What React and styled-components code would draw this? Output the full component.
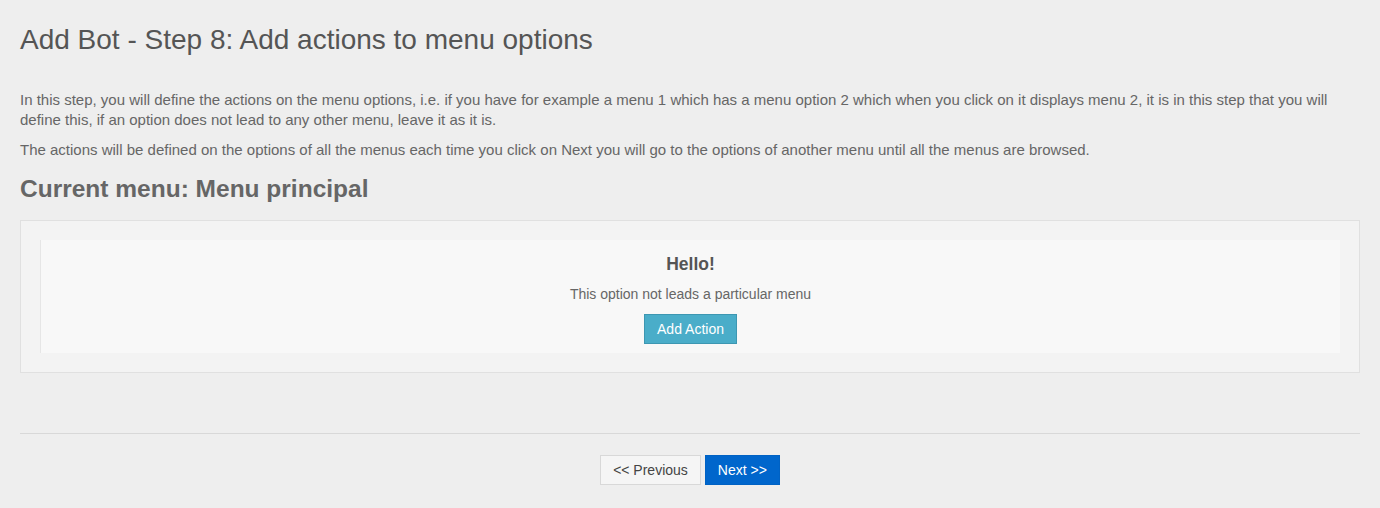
import React from "react";
import styled, { createGlobalStyle } from "styled-components";

const Global = createGlobalStyle`
  html, body { margin: 0; padding: 0; background: #eeeeee; }
  body { font-family: "Liberation Sans", Arial, sans-serif; color: #666; }
`;

const Page = styled.div`
  padding: 0 20px;
`;

const Title = styled.h1`
  margin: 0;
  padding-top: 24px;
  font-size: 28px;
  font-weight: normal;
  line-height: 32px;
  color: #555;
`;

const Intro = styled.p`
  margin: ${(p) => p.$top || 0}px 0 0;
  font-size: 15px;
  line-height: 20px;
  color: #666;
`;

const SubTitle = styled.h2`
  margin: 14px 0 0;
  font-size: 24.5px;
  font-weight: bold;
  line-height: 30px;
  color: #666;
`;

const Panel = styled.div`
  margin-top: 16px;
  border: 1px solid #e0e0e0;
  background: #f3f3f3;
  padding: 19px 19px;
`;

const Card = styled.div`
  background: #f8f8f8;
  border-left: 1px solid #e6e6e6;
  display: flex;
  flex-direction: column;
  align-items: center;
  padding: 14px 0 9px;
`;

const CardTitle = styled.h3`
  margin: 0;
  font-size: 17.5px;
  font-weight: bold;
  line-height: 20px;
  color: #555;
`;

const CardText = styled.p`
  margin: 10px 0 0;
  font-size: 14px;
  line-height: 20px;
  color: #666;
`;

const ActionButton = styled.button`
  margin-top: 10px;
  height: 30px;
  padding: 0 12px;
  background: #4aadc9;
  border: 1px solid #3d97b2;
  color: #fff;
  font-family: inherit;
  font-size: 14px;
`;

const Divider = styled.hr`
  margin: 60px 0 0;
  border: 0;
  border-top: 1px solid #d8d8d8;
`;

const Nav = styled.div`
  display: flex;
  justify-content: center;
  gap: 4px;
  margin-top: 21px;
`;

const NavButton = styled.button`
  height: 30px;
  padding: 0 12px;
  font-family: inherit;
  font-size: 14px;
  border: 1px solid ${(p) => (p.$primary ? "#0062c4" : "#d8d8d8")};
  background: ${(p) => (p.$primary ? "#0066cc" : "#f5f5f5")};
  color: ${(p) => (p.$primary ? "#fff" : "#444")};
`;

export default function App() {
  return (
    <Page>
      <Global />
      <Title>Add Bot - Step 8: Add actions to menu options</Title>
      <Intro $top={34}>
        In this step, you will define the actions on the menu options, i.e. if you have for example a menu 1 which has a menu option 2 which when you click on it displays menu 2, it is in this step that you will define this, if an option does not lead to any other menu, leave it as it is.
      </Intro>
      <Intro $top={10}>
        The actions will be defined on the options of all the menus each time you click on Next you will go to the options of another menu until all the menus are browsed.
      </Intro>
      <SubTitle>Current menu: Menu principal</SubTitle>
      <Panel>
        <Card>
          <CardTitle>Hello!</CardTitle>
          <CardText>This option not leads a particular menu</CardText>
          <ActionButton>Add Action</ActionButton>
        </Card>
      </Panel>
      <Divider />
      <Nav>
        <NavButton>&lt;&lt; Previous</NavButton>
        <NavButton $primary>Next &gt;&gt;</NavButton>
      </Nav>
    </Page>
  );
}
